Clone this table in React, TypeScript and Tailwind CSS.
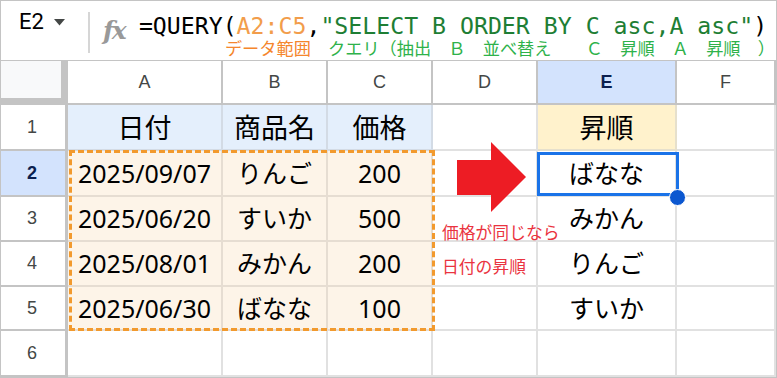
import React from "react";

const COLS = ["A", "B", "C", "D", "E", "F"];

const ROWS: string[][] = [
  ["日付", "商品名", "価格", "", "昇順", ""],
  ["2025/09/07", "りんご", "200", "", "ばなな", ""],
  ["2025/06/20", "すいか", "500", "", "みかん", ""],
  ["2025/08/01", "みかん", "200", "", "りんご", ""],
  ["2025/06/30", "ばなな", "100", "", "すいか", ""],
  ["", "", "", "", "", ""],
];

function cellClass(r: number, c: number): string {
  // r: 1-based sheet row, c: 0-based column index (A = 0)
  if (r === 1 && c <= 2)
    return "bg-[#e4effc] border-[#d3dbe5] text-[27px]";
  if (r === 1 && c === 4)
    return "bg-[#fff2cc] border-[#e6e0cc] text-[27px]";
  if (r >= 2 && r <= 5 && c <= 2)
    return "bg-[#fdf4e8] border-[#e6ddd2] text-[25px]";
  return "bg-white border-[#e1e1e1] text-[25px]";
}

function FormulaBar() {
  return (
    <div className="h-[60px] border-b border-[#c4c4c4] flex items-start bg-white">
      <div className="flex items-center pl-[18px] pt-[12px] h-[30px]">
        <span className="font-['Roboto','Liberation_Sans',sans-serif] text-[22px] leading-[28px] text-black">
          E2
        </span>
        <svg width="11" height="7" viewBox="0 0 11 7" className="ml-[10px]">
          <polygon points="0,0 11,0 5.5,6.5" fill="#444746" />
        </svg>
      </div>
      <div className="ml-[23px] mt-[11px] w-[2px] h-[41px] bg-[#d6d6d6]" />
      <div className="ml-[10px] mt-[12px] w-[28px] h-[34px] flex items-center justify-center">
        <span className="font-['DejaVu_Serif',serif] italic font-bold text-[25px] leading-none text-[#999999] tracking-[-2px]">
          fx
        </span>
      </div>
      <div className="ml-[11px] flex flex-col">
        <div className="pt-[12px] h-[38px] whitespace-nowrap font-['DejaVu_Sans_Mono',monospace] text-[23.2px] leading-[26px] text-black">
          <span>=QUERY(</span>
          <span className="text-[#f29d4b]">A2:C5</span>
          <span>,</span>
          <span className="text-[#1e7e34]">"SELECT B ORDER BY C asc,A asc"</span>
          <span>)</span>
        </div>
        <div className="ml-[86px] whitespace-nowrap font-['Noto_Sans_CJK_JP',sans-serif] text-[17.2px] leading-[18px]">
          <span className="text-[#f5862c]">データ範囲</span>
          <span className="text-[#2eb24a]">　クエリ（抽出　Ｂ　並べ替え　　Ｃ　昇順　Ａ　昇順　）</span>
        </div>
      </div>
    </div>
  );
}

function Sheet() {
  return (
    <div className="relative">
      <div className="grid grid-cols-[67px_155px_105px_105px_105px_139px_99px] grid-rows-[44px_46px_46px_45px_45px_44px_46px]">
        {/* corner */}
        <div className="bg-[#f8f9fa] border-r-[7px] border-b-[7px] border-[#c4c4c4]" />
        {COLS.map((l) => (
          <div
            key={l}
            className={
              l === "E"
                ? "bg-[#d3e3fd] border-r-2 border-b-2 border-[#c4c4c4] flex items-center justify-center font-['Liberation_Sans',sans-serif] text-[18px] font-bold text-[#0b1f4f]"
                : "bg-white border-r-2 border-b-2 border-[#c4c4c4] flex items-center justify-center font-['Liberation_Sans',sans-serif] text-[18px] text-[#444746]"
            }
          >
            {l}
          </div>
        ))}
        {ROWS.map((row, ri) => {
          const r = ri + 1;
          return (
            <React.Fragment key={r}>
              <div
                className={
                  r === 2
                    ? "bg-[#d3e3fd] border-r-[3px] border-b-2 border-[#c4c4c4] flex items-center justify-center pr-[2px] font-['Liberation_Sans',sans-serif] text-[18px] font-bold text-[#0b1f4f]"
                    : "bg-white border-r-[3px] border-b-2 border-[#c4c4c4] flex items-center justify-center pr-[2px] font-['Liberation_Sans',sans-serif] text-[18px] text-[#444746]"
                }
              >
                {r}
              </div>
              {row.map((v, c) => (
                <div
                  key={c}
                  className={`${cellClass(r, c)} border-r-2 border-b-2 flex items-center justify-center font-['Noto_Sans','Noto_Sans_CJK_JP',sans-serif] text-black leading-none`}
                >
                  {v}
                </div>
              ))}
            </React.Fragment>
          );
        })}
      </div>

      {/* referenced range A2:C5 */}
      <div className="absolute left-[68px] top-[89px] w-[366px] h-[181px] border-[3px] border-dashed border-[#f29a2e] pointer-events-none" />

      {/* active cell E2 with fill handle */}
      <div className="absolute left-[536px] top-[91px] w-[142px] h-[44px] border-[3px] border-[#1a73e8] pointer-events-none" />
      <div className="absolute left-[668px] top-[128px] w-[17px] h-[17px] rounded-full bg-[#0b57d0] border border-white" />

      {/* arrow */}
      <svg
        className="absolute left-[456px] top-[81px]"
        width="70"
        height="71"
        viewBox="0 0 70 71"
      >
        <polygon points="0,18 34,18 34,0 69,35 34,70 34,53 0,53" fill="#ed1c24" />
      </svg>

      {/* note in column D */}
      <div className="absolute left-[441px] top-[154px] font-['Noto_Sans_CJK_JP',sans-serif] text-[16.8px] leading-[34px] text-[#ea3340] whitespace-nowrap">
        <div>価格が同じなら</div>
        <div>日付の昇順</div>
      </div>
    </div>
  );
}

export default function App() {
  return (
    <div className="w-[777px] h-[378px] overflow-hidden bg-white border border-[#c4c4c4]">
      <FormulaBar />
      <Sheet />
    </div>
  );
}
